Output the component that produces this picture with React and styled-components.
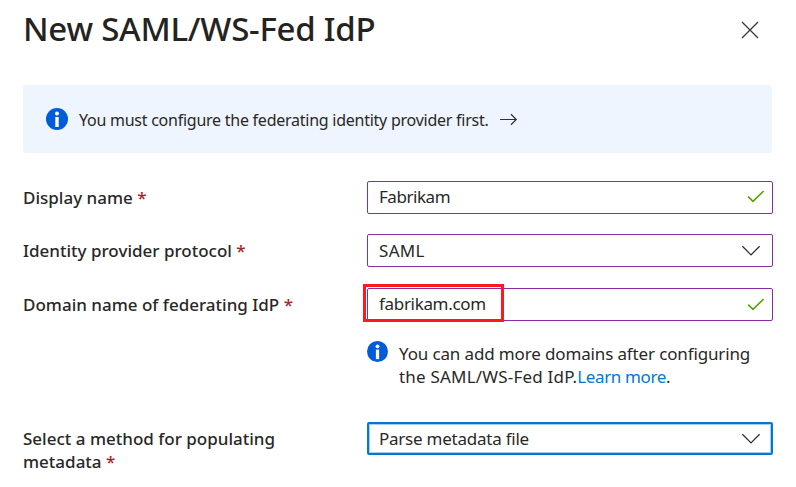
import React from 'react';
import styled, { createGlobalStyle } from 'styled-components';

const GlobalStyle = createGlobalStyle`
  * { box-sizing: border-box; }
  body {
    margin: 0;
    background: #fff;
    color: #292827;
    font-family: "Noto Sans", "Open Sans", sans-serif;
    font-size: 17px;
    line-height: 23px;
  }
`;

const Panel = styled.main`
  width: 796px;
  height: 487px;
  padding: 0 23px;
  overflow: hidden;
`;

const Header = styled.header`
  display: flex;
  justify-content: space-between;
  height: 85px;
`;

const Title = styled.h1`
  margin: 6px 0 0;
  font-size: 33px;
  line-height: 46px;
  font-weight: 500;
  letter-spacing: -0.24px;
  color: #242322;
`;

const CloseButton = styled.button`
  width: 18px;
  height: 18px;
  margin: 21px 14px 0 0;
  padding: 0;
  border: 0;
  background: none;
  color: #3b3a39;
`;

const Svg = styled.svg`
  display: block;
  flex: none;
`;

const Banner = styled.section`
  display: flex;
  align-items: flex-start;
  width: 749px;
  height: 68px;
  margin-bottom: 28px;
  padding: 23px 23px 0;
  border-radius: 3px;
  background: #eef5ff;
`;

const BannerText = styled.span`
  margin: 1px 11px 0 11px;
  font-size: 16px;
  letter-spacing: -0.25px;
`;

const Row = styled.div`
  display: grid;
  grid-template-columns: 344px 406px;
  margin-bottom: ${p => p.$gap}px;
`;

const Label = styled.label`
  padding: 5px 60px 0 0;
  font-weight: 500;
  letter-spacing: 0;
`;

const Required = styled.span`
  color: #a4262c;
`;

const Field = styled.div`
  position: relative;
  display: flex;
  justify-content: space-between;
  height: 33px;
  padding: ${p => p.$lift ? 3 : 4}px ${p => p.$trail}px 0 11px;
  border: 1px solid #8a2da5;
  border-radius: 2px;
`;

const FocusedField = styled(Field)`
  padding-top: 3px;
  padding-left: 10px;
  border: 2px solid #0078d4;
  box-shadow: inset 0 0 0 1px #a5d0f2;
`;

const Value = styled.span`
  letter-spacing: ${p => p.$track}px;
`;

const Highlight = styled.span`
  position: absolute;
  left: -5px;
  top: -5px;
  width: 141px;
  height: 38px;
  border: 3px solid #fb1b1e;
`;

const Note = styled.div`
  display: flex;
  margin: 20px 0 34px 344px;
`;

const NoteText = styled.p`
  margin: 1px 0 0 11px;
  white-space: nowrap;
`;

const NoteLine = styled.span`
  display: block;
`;

const Link = styled.a`
  color: #0078d4;
  letter-spacing: -0.36px;
`;

const Info = ({ size }) => (
  <Svg width={size} height={size} viewBox="0 0 22 22">
    <circle cx="11" cy="11" r="11" fill="#015cda" />
    <circle cx="11" cy="5.6" r="2" fill="#fff" />
    <rect x="9.3" y="9" width="3.4" height="10" fill="#fff" />
  </Svg>
);

const Check = () => (
  <Svg width="18" height="14" viewBox="0 0 18 14">
    <path d="M1.2 6.6 L6 11.4 L16.6 1" fill="none" stroke="#57a300" strokeWidth="1.6" />
  </Svg>
);

const Chevron = () => (
  <Svg width="20" height="12" viewBox="0 0 20 12">
    <path d="M1.4 1.3 L10 9.9 L18.6 1.3" fill="none" stroke="#323130" strokeWidth="1.3" />
  </Svg>
);

const IconSlot = styled.span`
  margin-top: ${p => p.$top}px;
`;

const FieldLabel = ({ children }) => (
  <Label>{children} <Required>*</Required></Label>
);

export default function App() {
  return (
    <Panel>
      <GlobalStyle />
      <Header>
        <Title>New SAML/WS-Fed IdP</Title>
        <CloseButton aria-label="Close">
          <Svg width="18" height="18" viewBox="0 0 18 18">
            <path d="M1 1 L17 17 M17 1 L1 17" fill="none" stroke="currentColor" strokeWidth="1.3" />
          </Svg>
        </CloseButton>
      </Header>
      <Banner>
        <Info size={22} />
        <BannerText>You must configure the federating identity provider first.</BannerText>
        <Svg width="18" height="22" viewBox="0 0 18 22">
          <path d="M0 11.5 H16.2 M11 6.3 L16.3 11.5 L11 16.7" fill="none" stroke="#323130" strokeWidth="1.2" />
        </Svg>
      </Banner>
      <Row $gap={20}>
        <FieldLabel>Display name</FieldLabel>
        <Field $lift $trail={7}>
          <Value $track={-0.45}>Fabrikam</Value>
          <IconSlot $top={5}><Check /></IconSlot>
        </Field>
      </Row>
      <Row $gap={21}>
        <FieldLabel>Identity provider protocol</FieldLabel>
        <Field $trail={11}>
          <Value $track={0.3}>SAML</Value>
          <IconSlot $top={6}><Chevron /></IconSlot>
        </Field>
      </Row>
      <Row $gap={0}>
        <FieldLabel>Domain name of federating IdP</FieldLabel>
        <Field $lift $trail={7}>
          <Value $track={-0.32}>fabrikam.com</Value>
          <IconSlot $top={6}><Check /></IconSlot>
          <Highlight />
        </Field>
      </Row>
      <Note>
        <Info size={21} />
        <NoteText>
          <NoteLine><Value $track={-0.14}>You can add more domains after configuring</Value></NoteLine>
          <NoteLine>
            <Value $track={0.2}>the SAML/WS-Fed IdP.</Value>
            <Link>Learn more</Link>.
          </NoteLine>
        </NoteText>
      </Note>
      <Row $gap={0}>
        <FieldLabel>Select a method for populating metadata</FieldLabel>
        <FocusedField $trail={10}>
          <Value $track={-0.24}>Parse metadata file</Value>
          <IconSlot $top={6}><Chevron /></IconSlot>
        </FocusedField>
      </Row>
    </Panel>
  );
}
